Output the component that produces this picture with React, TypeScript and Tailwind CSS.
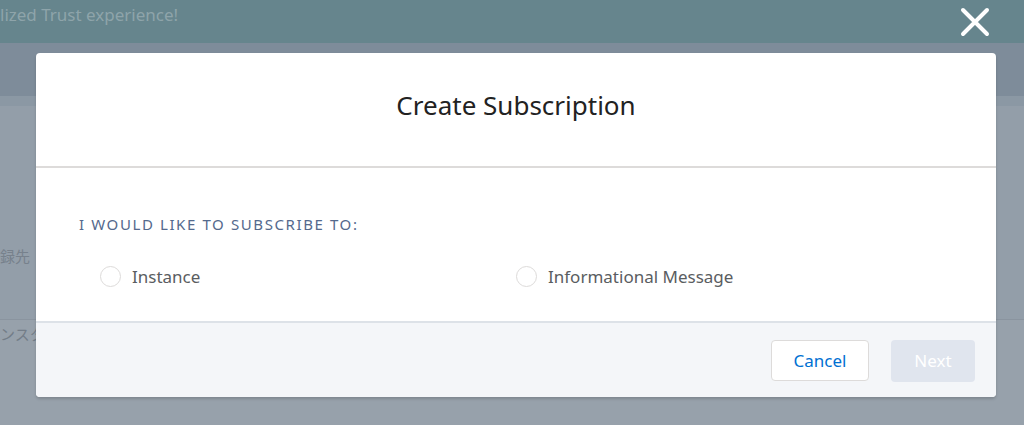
import React, { useState } from 'react';

const font = { fontFamily: '"Noto Sans", "Open Sans", "Noto Sans CJK JP", sans-serif' };

function Radio({ label, checked, onChange }: { label: string; checked: boolean; onChange: () => void }) {
  return (
    <label className="flex items-center gap-[11px] cursor-pointer" onClick={onChange}>
      <span className="w-[21px] h-[21px] rounded-full border border-[#dddbda] bg-white flex items-center justify-center">
        {checked && <span className="w-[9px] h-[9px] rounded-full bg-[#0070d2]" />}
      </span>
      <span className="text-[17px] text-[#5a5d61] leading-none">{label}</span>
    </label>
  );
}

export default function App() {
  const [choice, setChoice] = useState<string | null>(null);

  return (
    <div className="relative w-[1024px] h-[425px] overflow-hidden bg-[#939ea9]" style={font}>
      {/* Page behind the backdrop */}
      <div className="flex flex-col h-full">
        <div className="h-[43px] bg-[#66858d] flex items-start pt-[2px]">
          <span className="text-[17px] text-[#8ea4aa]">lized Trust experience!</span>
        </div>
        <div className="h-[53px] bg-[#7e8c9a]" />
        <div className="h-[10px] bg-[#8b98a4]" />
        <div className="flex-1 flex flex-col">
          <div className="h-[214px] border-b border-[#8a949f] flex items-center pt-[87px]">
            <span className="text-[15px] text-[#77818c]">録先</span>
          </div>
          <div className="flex-1 bg-[#97a1ab] pt-[2px]">
            <span className="text-[15px] text-[#737d88]">ンスタ</span>
          </div>
        </div>
      </div>

      {/* Close */}
      <button className="absolute left-[959px] top-[6px] w-[32px] h-[32px]" aria-label="Close">
        <svg viewBox="0 0 32 32" className="w-[32px] h-[32px]">
          <path d="M4 4 L28 28 M28 4 L4 28" stroke="#ffffff" strokeWidth="4" strokeLinecap="round" fill="none" />
        </svg>
      </button>

      {/* Modal */}
      <div className="absolute left-[36px] top-[53px] w-[960px] h-[344px] rounded-[4px] bg-white shadow-[0_2px_3px_rgba(0,0,0,0.16)] flex flex-col overflow-hidden">
        <div className="h-[115px] border-b-2 border-[#dddbda] flex items-center justify-center">
          <h2 className="text-[26px] text-[#222222] font-normal pb-[8px]">Create Subscription</h2>
        </div>
        <div className="flex-1 px-[43px] pt-[49px]">
          <div className="text-[15px] tracking-[1.6px] text-[#54698d] uppercase leading-none">
            I would like to subscribe to:
          </div>
          <div className="grid grid-cols-2 mt-[34px]">
            <div className="pl-[21px]">
              <Radio label="Instance" checked={choice === 'instance'} onChange={() => setChoice('instance')} />
            </div>
            <div>
              <Radio label="Informational Message" checked={choice === 'info'} onChange={() => setChoice('info')} />
            </div>
          </div>
        </div>
        <div className="h-[76px] border-t-2 border-[#dde2e8] bg-[#f4f6f9] flex items-start justify-end gap-[22px] pt-[17px] pr-[21px]">
          <button className="w-[98px] h-[41px] rounded-[4px] border border-[#dddbda] bg-white text-[17px] text-[#0070d2]">
            Cancel
          </button>
          <button className="w-[84px] h-[42px] rounded-[4px] bg-[#e0e5ee] text-[17px] text-white" disabled={!choice}>
            Next
          </button>
        </div>
      </div>
    </div>
  );
}
